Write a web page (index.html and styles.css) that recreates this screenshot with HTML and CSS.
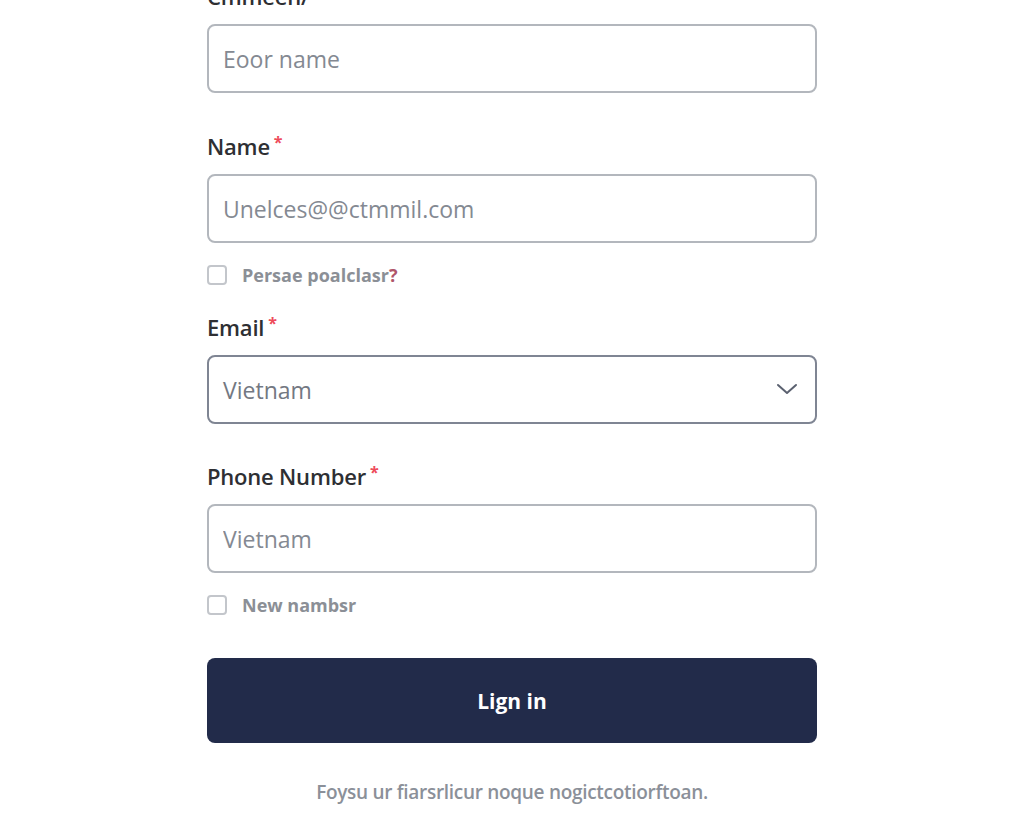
FILE: index.html
```html
<!DOCTYPE html>
<html lang="en">
<head>
  <meta charset="UTF-8" />
  <meta name="viewport" content="width=device-width, initial-scale=1" />
  <title>Sign in</title>
  <link rel="stylesheet" href="styles.css">
</head>
<body>
  <form class="signup">
    <div class="field">
      <label class="label">Cmmeen/</label>
      <input class="input" type="text" placeholder="Eoor name" />
    </div>

    <div class="field">
      <label class="label">Name<span class="req">*</span></label>
      <input class="input" type="text" placeholder="Unelces@@ctmmil.com" />
    </div>

    <label class="check">
      <input type="checkbox" />
      <span>Persae poalclasr<span class="q">?</span></span>
    </label>

    <div class="field field-email">
      <label class="label">Email<span class="req">*</span></label>
      <div class="select">
        <span>Vietnam</span>
        <svg width="24" height="24" viewBox="0 0 24 24" fill="none" stroke="#5b6170" stroke-width="2" stroke-linecap="round" stroke-linejoin="round">
          <path d="M3 7l9 8 9-8" />
        </svg>
      </div>
    </div>

    <div class="field">
      <label class="label">Phone Number<span class="req">*</span></label>
      <input class="input" type="text" placeholder="Vietnam" />
    </div>

    <label class="check">
      <input type="checkbox" />
      <span>New nambsr</span>
    </label>

    <button class="submit" type="submit">Lign in</button>

    <p class="foot">Foysu ur fiarsrlicur noque nogictcotiorftoan.</p>
  </form>
</body>
</html>
```

FILE: styles.css
```css
body {
  margin: 0;
  background: #ffffff;
  font-family: "Open Sans", "Noto Sans", sans-serif;
  color: #2e2f33;
  overflow: hidden;
}

.signup {
  width: 610px;
  margin: -19px auto 0;
  display: flex;
  flex-direction: column;
}

.field {
  display: flex;
  flex-direction: column;
  gap: 13px;
  margin-bottom: 38px;
}

.label {
  font-size: 22px;
  font-weight: 600;
  line-height: 30px;
  color: #2e2f33;
  letter-spacing: -0.2px;
}

.req {
  color: #ee4b5a;
  font-size: 16px;
  font-weight: 700;
  vertical-align: top;
  margin-left: 4px;
  line-height: 22px;
}

.input,
.select {
  box-sizing: border-box;
  height: 69px;
  width: 100%;
  border: 2px solid #b3b7bd;
  border-radius: 8px;
  padding: 0 14px;
  font-family: inherit;
  font-size: 23px;
  color: #2e2f33;
  background: #fff;
}

.input::placeholder {
  color: #848992;
}

.select {
  display: flex;
  align-items: center;
  justify-content: space-between;
  border-color: #7f8593;
  color: #737882;
  padding-right: 16px;
}

.check {
  display: flex;
  align-items: center;
  gap: 15px;
  height: 20px;
  margin: -16px 0 27px;
  font-size: 18px;
  font-weight: 700;
  color: #8b8f96;
}

.check input {
  appearance: none;
  margin: 0;
  width: 20px;
  height: 20px;
  border: 2px solid #c3c6cb;
  border-radius: 4px;
  box-sizing: border-box;
}

.check .q {
  color: #b0566a;
}

.field-email {
  margin-bottom: 37px;
}

.submit {
  height: 85px;
  margin-top: 16px;
  border: none;
  border-radius: 8px;
  background: #222b4a;
  color: #fff;
  font-family: inherit;
  font-size: 21px;
  font-weight: 700;
  cursor: pointer;
}

.foot {
  margin: 37px 0 0;
  text-align: center;
  line-height: 24px;
  font-size: 19px;
  font-weight: 600;
  color: #8b9099;
  letter-spacing: -0.3px;
}
```
